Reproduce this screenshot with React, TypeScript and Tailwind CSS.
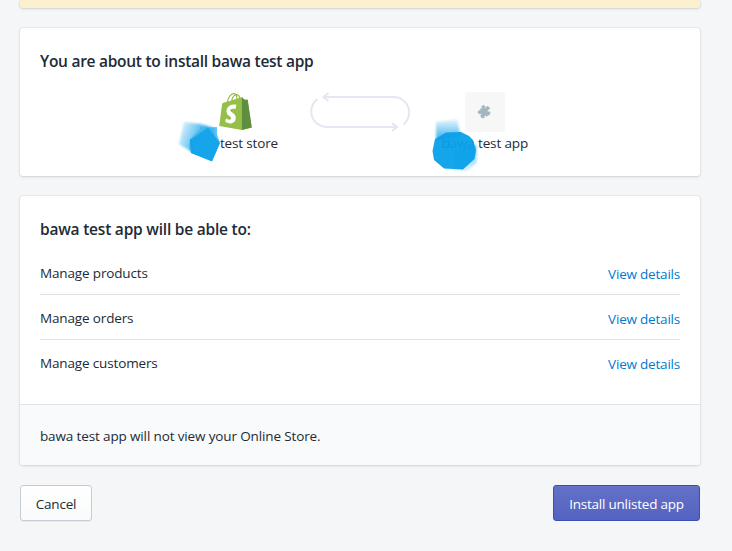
import type { ReactNode } from "react";

const cardShadow =
  "rounded-[3px] shadow-[0_0_0_1px_rgba(63,63,68,0.05),0_1px_3px_0_rgba(63,63,68,0.15)]";

function Card({ children, className = "" }: { children: ReactNode; className?: string }) {
  return <section className={`overflow-hidden bg-white ${cardShadow} ${className}`}>{children}</section>;
}

function ShopifyBag() {
  return (
    <svg className="-mt-px h-[37px] w-[33px]" viewBox="0 0 109.5 124.5" aria-hidden="true">
      <path
        fill="#95BF47"
        d="M95.9 23.9c-.1-.6-.6-1-1.1-1-.5 0-9.3-.2-9.3-.2s-7.4-7.2-8.1-7.9c-.7-.7-2.2-.5-2.7-.3 0 0-1.4.4-3.7 1.1-.4-1.3-1-2.8-1.8-4.4-2.6-5-6.5-7.7-11.1-7.7-.3 0-.6 0-1 .1-.1-.2-.3-.3-.4-.5-2-2.2-4.6-3.2-7.7-3.1-6 .2-12 4.5-16.8 12.2-3.4 5.4-6 12.2-6.8 17.5-6.9 2.1-11.7 3.6-11.8 3.7-3.5 1.1-3.6 1.2-4 4.5-.3 2.5-9.5 73-9.5 73l76.4 13.2 33.1-8.2S96 24.5 95.9 23.9zM67.2 16.8c-1.8.5-3.8 1.2-5.9 1.8 0-3-.4-7.3-1.8-10.9 4.5.9 6.7 5.9 7.7 9.1zm-10 3.1c-4 1.2-8.4 2.6-12.8 3.9 1.2-4.7 3.6-9.4 6.4-12.5 1.1-1.1 2.6-2.4 4.3-3.2 1.8 3.6 2.2 8.5 2.1 11.8zM49.1 3.9c1.4 0 2.6.3 3.6 1-1.6.9-3.2 2.1-4.7 3.7-3.8 4.1-6.7 10.5-7.9 16.6-3.6 1.1-7.2 2.2-10.5 3.2C31.7 18.8 39.8 4.2 49.1 3.9z"
      />
      <path
        fill="#5E8E3E"
        d="M94.8 22.9c-.5 0-9.3-.2-9.3-.2s-7.4-7.2-8.1-7.9c-.3-.3-.6-.4-1-.5v109.8l33.1-8.2S96 24.5 95.9 23.9c-.1-.6-.6-1-1.1-1z"
      />
      <path
        fill="#FFF"
        d="M58 39.9l-3.8 14.4s-4.3-2-9.4-1.6c-7.5.5-7.5 5.2-7.5 6.4.4 6.4 17.3 7.8 18.3 22.9.7 11.9-6.3 20-16.4 20.6-12.2.8-18.9-6.4-18.9-6.4l2.6-11s6.7 5.1 12.1 4.7c3.5-.2 4.8-3.1 4.7-5.1-.5-8.4-14.3-7.9-15.2-21.7-.7-11.6 6.9-23.4 23.7-24.4 6.5-.4 9.8 1.2 9.8 1.2z"
      />
    </svg>
  );
}

function ExchangeArrows() {
  return (
    <svg className="-ml-px h-[40px] w-[102px]" viewBox="0 0 102 40" fill="none" stroke="#e4e6f0" strokeWidth="2" aria-hidden="true">
      <path d="M8.5 7A15.5 15.5 0 0 0 17 35H87.5" />
      <path d="M15 5H85A15.5 15.5 0 0 1 94.5 32.5" />
      <path d="M19.5 1L14.5 5L19.5 9M83 31L88 35L83 39" />
    </svg>
  );
}

/* Tilted puzzle piece: knobs on the left and top, sockets on the right and bottom */
function PuzzlePiece() {
  return (
    <svg className="size-[22px]" viewBox="0 0 66 66" aria-hidden="true">
      <path
        fill="#a3b5be"
        stroke="#a3b5be"
        strokeWidth="2"
        strokeLinejoin="round"
        d="M19 23L25 24C26 21 22 19 24 16C26 12 32 13 33 17C33 20 31 22 34 23L39 16L47 20L44 26C40 26 39 30 41 32C43 34 45 31 48 34C49 39 46 43 42 42L39 46L34 43C31 42 30 45 31 50L24 51L20 45L23 38C21 36 19 39 16 38C11 37 11 31 15 29C18 28 20 30 21 29Z"
      />
    </svg>
  );
}

/* Brush scribble covering the store name */
function StoreScribble() {
  return (
    <svg className="absolute left-[176px] top-[116px] h-[50px] w-[48px]" viewBox="176 116 48 50" aria-hidden="true">
      <defs>
        <linearGradient id="storeFade" x1="0" x2="1" y1="0" y2=".35">
          <stop offset="0" stopColor="#1fa8ec" stopOpacity="0.08" />
          <stop offset=".75" stopColor="#12a2ea" stopOpacity="0.85" />
        </linearGradient>
        <filter id="storeSoft">
          <feGaussianBlur stdDeviation=".9" />
        </filter>
      </defs>
      <path
        filter="url(#storeSoft)"
        fill="url(#storeFade)"
        d="M184 122L201 124L214 128L216 140L207 153L190 151L179 144Z"
      />
      <path fill="#3fb5ef" opacity=".8" d="M190 139L201 128L217 127L217 134L220 143L212 161L191 153L189 148Z" />
      <path fill="#16a4ea" d="M190 140L208 127.500L220 143L212 161.500L191 153Z" />
      <path stroke="#0797df" strokeWidth=".6" strokeOpacity=".6" fill="none" d="M190 139L193 151M201 126V129" />
    </svg>
  );
}

/* Brush scribble covering the start of the app name */
function AppScribble() {
  return (
    <svg className="absolute left-[430px] top-[116px] h-[58px] w-[50px]" viewBox="430 116 50 58" aria-hidden="true">
      <defs>
        <linearGradient id="appFade" x1="0" x2="0" y1="0" y2="1">
          <stop offset="0" stopColor="#1fa8ec" stopOpacity="0.1" />
          <stop offset="1" stopColor="#12a2ea" stopOpacity="0.85" />
        </linearGradient>
        <linearGradient id="appTail" x1="0" x2="0" y1="0" y2="1">
          <stop offset="0" stopColor="#12a2ea" stopOpacity="0.7" />
          <stop offset="1" stopColor="#1fa8ec" stopOpacity="0.15" />
        </linearGradient>
        <filter id="appSoft">
          <feGaussianBlur stdDeviation=".8" />
        </filter>
      </defs>
      <path filter="url(#appSoft)" fill="url(#appFade)" d="M436 122L457 119L461 137L436 140Z" />
      <path filter="url(#appSoft)" fill="url(#appTail)" d="M455 150L476.500 145V163L467 171H453Z" />
      <path
        fill="#08a0e9"
        fillOpacity=".95"
        d="M432.500 151L435 139L446 132.500L461 132L469 136L473 140L476 150L474.500 159L463 169.500L444 168.500L434 160Z"
      />
      <path stroke="#0994d8" strokeWidth=".6" fill="none" d="M438 154V155M441 156V157M449 139V148" />
    </svg>
  );
}

const permissions = ["Manage products", "Manage orders", "Manage customers"];

export default function App() {
  return (
    <main className="relative h-[551px] w-[732px] overflow-hidden bg-[#f4f6f8] pl-5 pr-8 font-['Open_Sans','Noto_Sans',sans-serif] text-[13.5px] leading-5 tracking-[-0.15px] text-[#212b36]">
      <div className="h-2 rounded-b-[3px] bg-[#fcf1cd] shadow-[0_0_0_1px_rgba(63,63,68,0.05),0_1px_3px_0_rgba(63,63,68,0.15)]" />

      <Card className="mt-5 h-[148px] px-5 pt-[21px]">
        <h2 className="text-[15.5px] font-semibold leading-6 tracking-[-0.27px]">You are about to install bawa test app</h2>
        <div className="mt-[19px] flex justify-center">
          <div className="flex w-[150px] flex-col items-center">
            <div className="flex h-10 items-center">
              <ShopifyBag />
            </div>
            <p className="mt-[1px] w-[86px] text-right">test store</p>
          </div>
          <div className="w-[100px]">
            <ExchangeArrows />
          </div>
          <div className="flex w-[150px] flex-col items-center">
            <div className="flex size-10 items-center justify-center rounded-[3px] bg-[#f7f7f7]">
              <PuzzlePiece />
            </div>
            <p className="mt-[1px] flex w-[86px] justify-end whitespace-nowrap">bawa test app</p>
          </div>
        </div>
      </Card>

      <Card className="mt-5 h-[269px]">
        <div className="h-[208px] px-5 pt-[21px]">
          <h2 className="text-[15.5px] font-semibold leading-6 tracking-[-0.22px]">bawa test app will be able to:</h2>
          <ul className="mt-[9px]">
            {permissions.map((name) => (
              <li
                key={name}
                className="flex h-[45px] items-start justify-between border-b border-[#dfe3e8] pt-[13px] last:border-b-0"
              >
                <span>{name}</span>
                <a className="mt-px tracking-[-0.21px] text-[#007ace]">View details</a>
              </li>
            ))}
          </ul>
        </div>
        <div className="h-[61px] border-t border-[#dfe3e8] bg-[#f9fafb] px-5 pt-[21px] tracking-[-0.135px]">
          bawa test app will not view your Online Store.
        </div>
      </Card>

      <div className="mt-5 flex justify-between">
        <button className="h-9 w-[72px] rounded-[3px] border border-[#c4cdd5] bg-gradient-to-b from-white to-[#f9fafb] pt-[2px] tracking-[-0.2px] shadow-[0_1px_0_0_rgba(22,29,37,0.05)]">
          Cancel
        </button>
        <button className="h-9 w-[147px] rounded-[3px] border border-[#3f4eae] bg-gradient-to-b from-[#6371c7] to-[#5563c1] pt-[2px] tracking-[-0.22px] text-white shadow-[inset_0_1px_0_0_#6774c8]">
          Install unlisted app
        </button>
      </div>

      <StoreScribble />
      <AppScribble />
    </main>
  );
}
